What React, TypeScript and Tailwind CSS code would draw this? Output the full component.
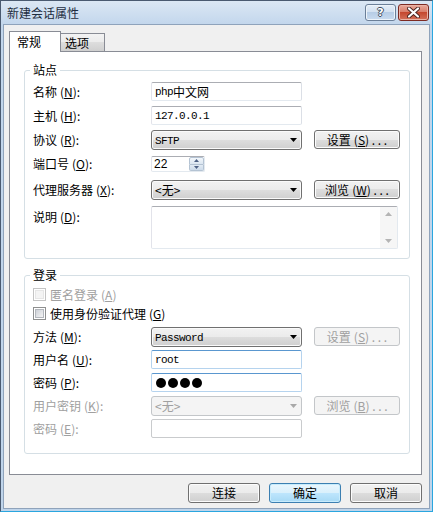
import type { ReactNode } from 'react';

const CJK = "font-['Noto_Sans_CJK_SC','Noto_Sans',sans-serif]";
const MONO = "font-['Liberation_Mono','Noto_Sans_CJK_SC',monospace] text-[11px] tracking-[-0.6px]";

function Label({ name, k, disabled }: { name: string; k: string; disabled?: boolean }) {
  return (
    <span className={`w-[118px] shrink-0 leading-[16px] whitespace-nowrap ${disabled ? 'text-[#a0a0a0]' : 'text-black'}`}>
      {name}
      <span className="ml-[3px]">
        (<span className="underline underline-offset-[1px]">{k}</span>):
      </span>
    </span>
  );
}

function TextBox({ children, focused, disabled }: { children?: ReactNode; focused?: boolean; disabled?: boolean }) {
  const border = focused
    ? 'border-[#b5d3ee] border-t-[#5a97cf]'
    : disabled
      ? 'border-[#c9cbcd]'
      : 'border-[#e3e9ef] border-t-[#abadb3] border-l-[#e2e3ea] border-r-[#dbdfe6]';
  return (
    <div className={`h-[19px] w-[151px] shrink-0 border rounded-[2px] bg-white flex items-center pl-[3px] leading-[16px] ${border}`}>
      {children}
    </div>
  );
}

function Select({ children, disabled }: { children: ReactNode; disabled?: boolean }) {
  return (
    <div
      className={`h-[20px] w-[151px] shrink-0 rounded-[3px] border flex items-center justify-between pl-[3px] pr-[4px] leading-[16px] ${
        disabled
          ? 'border-[#c3c6c9] bg-[#f4f4f4] text-[#a0a0a0]'
          : 'border-[#707070] bg-[linear-gradient(#f2f2f2_0%,#ebebeb_50%,#dddddd_50%,#cfcfcf_100%)] shadow-[inset_0_0_0_1px_#fafafa]'
      }`}
    >
      <span>{children}</span>
      <svg width="7" height="4" viewBox="0 0 7 4">
        <path d="M0 0h7L3.5 4z" fill={disabled ? '#a8a8a8' : '#000'} />
      </svg>
    </div>
  );
}

function Btn({ children, disabled, primary, w = 'w-[86px]', h = 'h-[19px]' }: { children: ReactNode; disabled?: boolean; primary?: boolean; w?: string; h?: string }) {
  let cls = 'border-[#707070] bg-[linear-gradient(#f2f2f2_0%,#ebebeb_50%,#dddddd_50%,#cfcfcf_100%)] shadow-[inset_0_0_0_1px_#fcfcfc] text-black';
  if (disabled) cls = 'border-[#c3c6c9] bg-[#f4f4f4] text-[#a0a0a0]';
  if (primary) cls = 'border-[#3c7fb1] bg-[linear-gradient(#eaf6fd_0%,#d9f0fc_50%,#bee6fd_50%,#a7d9f5_100%)] shadow-[inset_0_0_0_1px_#c8ecfc] text-black';
  return (
    <div className={`${w} ${h} shrink-0 rounded-[3px] border flex items-center justify-center leading-[16px] ${cls}`}>
      {children}
    </div>
  );
}

function Mn({ name, k, dots = true }: { name: string; k: string; dots?: boolean }) {
  return (
    <span className="whitespace-nowrap">
      {name}
      <span className="ml-[3px]">
        (<span className="underline underline-offset-[1px]">{k}</span>){dots ? ' . . .' : ''}
      </span>
    </span>
  );
}

function Check({ disabled }: { disabled?: boolean }) {
  return (
    <span className={`w-[13px] h-[13px] shrink-0 border flex items-center justify-center bg-white ${disabled ? 'border-[#c4c4c4]' : 'border-[#8e8f8f]'}`}>
      <span
        className={`w-[9px] h-[9px] border ${
          disabled ? 'border-[#e6e6e6] bg-[#f4f4f4]' : 'border-[#b3b7bd] bg-[linear-gradient(135deg,#cdd1d7,#f4f4f4)]'
        }`}
      />
    </span>
  );
}

function Group({ title, children, className = '' }: { title: string; children: ReactNode; className?: string }) {
  return (
    <fieldset className={`ml-[14px] w-[386px] border border-[#d5dfe5] rounded-[3px] pl-[8px] pr-[9px] ${className}`}>
      <legend className="px-[3px] -ml-[3px] leading-[14px]">{title}</legend>
      {children}
    </fieldset>
  );
}

function TitleBar() {
  return (
    <div className="h-[24px] flex justify-between shrink-0">
      <span className="ml-[6px] mt-[4px] leading-[16px] text-[12px] text-[#1e2d40]">新建会话属性</span>
      <div className="flex gap-[2px] mt-[3px] mr-[3px]">
        <div className="w-[31px] h-[17px] rounded-[3px] border border-[#6b7f98] bg-[linear-gradient(#e4edf7_0%,#d2e0f0_50%,#b7cde6_50%,#c9dbef_100%)] flex items-center justify-center shadow-[inset_0_0_0_1px_#eef4fa]">
          <span className="font-['DejaVu_Sans',sans-serif] font-bold text-[11px] leading-[12px] text-white [text-shadow:1px_0_0_#3e4d60,-1px_0_0_#3e4d60,0_1px_0_#3e4d60,0_-1px_0_#3e4d60]">?</span>
        </div>
        <div className="w-[31px] h-[17px] rounded-[3px] border border-[#7d2a22] bg-[linear-gradient(#e9a99b_0%,#d77a66_50%,#c5482f_50%,#d3715a_100%)] flex items-center justify-center shadow-[inset_0_0_0_1px_#eab3a5]">
          <svg width="13" height="11" viewBox="0 0 13 11">
            <path d="M2 1.5l9 8M11 1.5l-9 8" stroke="#4a2420" strokeWidth="4" strokeLinecap="round" />
            <path d="M2 1.5l9 8M11 1.5l-9 8" stroke="#fff" strokeWidth="2.2" strokeLinecap="round" />
          </svg>
        </div>
      </div>
    </div>
  );
}

export default function App() {
  return (
    <div className={`w-[433px] h-[512px] flex flex-col border border-[#4a5a70] border-r-[#2aa6df] border-b-[#2aa6df] bg-[linear-gradient(180deg,#dbe7f4_0px,#c2d6ec_24px,#bfd4ea_100%)] text-[12px] text-black ${CJK}`}>
      <TitleBar />
      <div className="mx-[3px] mb-[3px] flex-1 flex flex-col bg-[#f0f0f0] shadow-[0_0_0_1px_#8fa3bb] pl-[5px] pr-[7px] pt-[6px]">
        {/* tabs */}
        <div className="h-[20px] flex items-end">
          <div className="relative z-10 h-[21px] w-[52px] -mb-[1px] bg-white border border-b-0 border-[#898c95] pl-[7px] pt-[2px] leading-[16px]">
            常规
          </div>
          <div className="h-[18px] w-[44px] bg-[linear-gradient(#f3f3f3_0%,#ebebeb_50%,#dddddd_50%,#cfcfcf_100%)] border border-b-0 border-l-0 border-[#898c95] pl-[4px] pt-[1px] leading-[16px]">
            选项
          </div>
        </div>

        {/* panel */}
        <div className="h-[424px] border border-[#898c95] bg-white">
          <Group title="站点" className="mt-[11px] pt-[5px] pb-[9px]">
            <div className="flex items-center h-[19px]">
              <Label name="名称" k="N" />
              <TextBox>
                <span className={MONO}>php</span>
                <span>中文网</span>
              </TextBox>
            </div>
            <div className="flex items-center h-[19px] mt-[5px]">
              <Label name="主机" k="H" />
              <TextBox>
                <span className={MONO}>127.0.0.1</span>
              </TextBox>
            </div>
            <div className="flex items-center h-[20px] mt-[5px]">
              <Label name="协议" k="R" />
              <Select>
                <span className={MONO}>SFTP</span>
              </Select>
              <div className="ml-[12px] -mt-[1px]">
                <Btn>
                  <Mn name="设置" k="S" />
                </Btn>
              </div>
            </div>
            <div className="flex items-center h-[16px] mt-[6px]">
              <Label name="端口号" k="O" />
              <div className="h-[16px] w-[54px] border border-[#e3e9ef] border-t-[#abadb3] border-l-[#e2e3ea] rounded-[2px] bg-white flex">
                <span className="flex-1 pl-[2px] leading-[14px] font-['Liberation_Sans',sans-serif] text-[12px]">22</span>
                <div className="w-[15px] flex flex-col">
                  <div className="flex-1 border border-[#b4c3d3] bg-[linear-gradient(#f3f7fb,#dbe6f1)] rounded-t-[2px] flex items-center justify-center">
                    <svg width="5" height="3" viewBox="0 0 5 3"><path d="M0 3h5L2.5 0z" fill="#4d6185" /></svg>
                  </div>
                  <div className="flex-1 border border-t-0 border-[#b4c3d3] bg-[linear-gradient(#e2ebf4,#cddbea)] rounded-b-[2px] flex items-center justify-center">
                    <svg width="5" height="3" viewBox="0 0 5 3"><path d="M0 0h5L2.5 3z" fill="#4d6185" /></svg>
                  </div>
                </div>
              </div>
            </div>
            <div className="flex items-center h-[20px] mt-[8px]">
              <Label name="代理服务器" k="X" />
              <Select>&lt;无&gt;</Select>
              <div className="ml-[12px] -mt-[1px]">
                <Btn>
                  <Mn name="浏览" k="W" />
                </Btn>
              </div>
            </div>
            <div className="flex items-start h-[43px] mt-[6px]">
              <div className="w-[118px] shrink-0 pt-[3px] flex">
                <Label name="说明" k="D" />
              </div>
              <div className="h-[43px] w-[247px] shrink-0 border border-[#e3e9ef] border-t-[#abadb3] border-l-[#e2e3ea] rounded-[2px] bg-white flex justify-end">
                <div className="w-[17px] bg-[#f6f6f6] flex flex-col justify-between items-center py-[5px]">
                  <svg width="7" height="4" viewBox="0 0 7 4"><path d="M0 4h7L3.5 0z" fill="#b4b4b4" /></svg>
                  <svg width="7" height="4" viewBox="0 0 7 4"><path d="M0 0h7L3.5 4z" fill="#b4b4b4" /></svg>
                </div>
              </div>
            </div>
          </Group>

          <Group title="登录" className="mt-[9px] pt-[5px] pb-[15px]">
            <div className="flex items-center gap-[4px] h-[15px] text-[#a0a0a0] leading-[16px]">
              <Check disabled />
              <span>
                匿名登录
                <span className="ml-[3px]">
                  (<span className="underline underline-offset-[1px]">A</span>)
                </span>
              </span>
            </div>
            <div className="flex items-center gap-[4px] h-[15px] mt-[4px] leading-[16px]">
              <Check />
              <span>
                使用身份验证代理
                <span className="ml-[3px]">
                  (<span className="underline underline-offset-[1px]">G</span>)
                </span>
              </span>
            </div>
            <div className="flex items-center h-[20px] mt-[6px]">
              <Label name="方法" k="M" />
              <Select>
                <span className={MONO}>Password</span>
              </Select>
              <div className="ml-[12px] -mt-[1px]">
                <Btn disabled>
                  <Mn name="设置" k="S" />
                </Btn>
              </div>
            </div>
            <div className="flex items-center h-[19px] mt-[3px]">
              <Label name="用户名" k="U" />
              <TextBox focused>
                <span className={MONO}>root</span>
              </TextBox>
            </div>
            <div className="flex items-center h-[19px] mt-[4px]">
              <Label name="密码" k="P" />
              <TextBox focused>
                <span className="flex gap-[2px] pl-[1px]">
                  <span className="w-[10px] h-[10px] rounded-full bg-black" />
                  <span className="w-[10px] h-[10px] rounded-full bg-black" />
                  <span className="w-[10px] h-[10px] rounded-full bg-black" />
                  <span className="w-[10px] h-[10px] rounded-full bg-black" />
                </span>
              </TextBox>
            </div>
            <div className="flex items-center h-[19px] mt-[4px]">
              <Label name="用户密钥" k="K" disabled />
              <div className="h-[19px] flex">
                <Select disabled>&lt;无&gt;</Select>
              </div>
              <div className="ml-[12px]">
                <Btn disabled>
                  <Mn name="浏览" k="B" />
                </Btn>
              </div>
            </div>
            <div className="flex items-center h-[19px] mt-[4px]">
              <Label name="密码" k="E" disabled />
              <TextBox disabled />
            </div>
          </Group>
        </div>

        {/* footer buttons */}
        <div className="mt-[8px] flex justify-end gap-[9px]">
          <Btn w="w-[72px]" h="h-[20px]">连接</Btn>
          <Btn w="w-[72px]" h="h-[20px]" primary>确定</Btn>
          <Btn w="w-[72px]" h="h-[20px]">取消</Btn>
        </div>
      </div>
    </div>
  );
}
